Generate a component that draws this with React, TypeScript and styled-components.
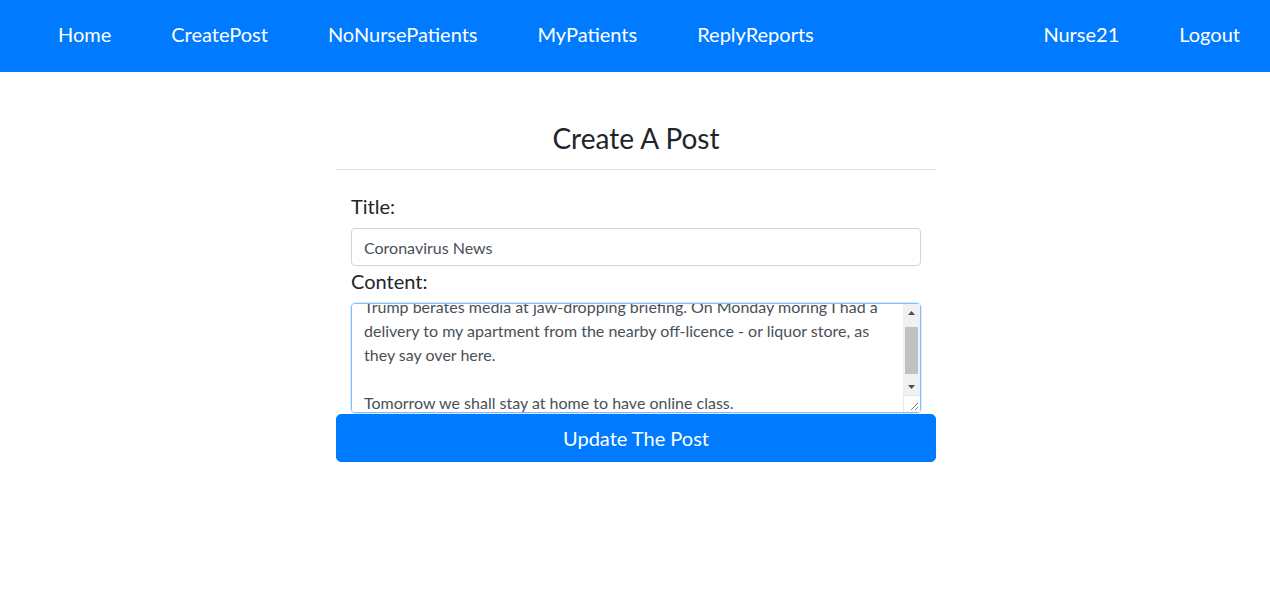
import React, { useEffect, useRef } from "react";
import styled, { createGlobalStyle } from "styled-components";

const Global = createGlobalStyle`
  html, body { margin: 0; padding: 0; background: #fff; }
  body { font-family: Lato, "Open Sans", sans-serif; color: #212529; }
  * { box-sizing: border-box; }
`;

const NavBar = styled.nav`
  height: 72px;
  background: #007bff;
  display: flex;
  align-items: center;
  padding: 0 0 5px 28px;
`;

const NavGroup = styled.div<{ $right?: boolean }>`
  display: flex;
  align-items: center;
  margin-left: ${(p) => (p.$right ? "auto" : "0")};
`;

const NavLink = styled.a`
  color: #fff;
  font-size: 20px;
  line-height: 30px;
  padding: 0 30px;
  text-decoration: none;
  cursor: pointer;
`;

const Card = styled.main`
  width: 600px;
  margin: 49px 0 0 calc(50% - 299px);
  display: flex;
  flex-direction: column;
`;

const Heading = styled.h1`
  margin: 0;
  font-size: 28px;
  font-weight: 400;
  line-height: 34px;
  text-align: center;
`;

const Divider = styled.hr`
  margin: 14px 0 0;
  border: 0;
  border-top: 1px solid #e2e2e2;
`;

const Fields = styled.div`
  padding: 21px 15px 0;
  display: flex;
  flex-direction: column;
`;

const Label = styled.label<{ $gap: number }>`
  font-size: 20px;
  line-height: 30px;
  margin-bottom: ${(p) => p.$gap}px;
`;

const Input = styled.input`
  height: 38px;
  width: 100%;
  padding: 6px 12px;
  font: inherit;
  font-size: 16px;
  line-height: 24px;
  color: #495057;
  border: 1px solid #ced4da;
  border-radius: 4px;
  outline: none;
`;

const AreaWrap = styled.div`
  position: relative;
  height: 110px;
`;

const Area = styled.textarea`
  height: 110px;
  width: 100%;
  padding: 6px 29px 6px 12px;
  font: inherit;
  font-size: 16px;
  line-height: 24px;
  color: #495057;
  border: 1px solid #80bdff;
  border-radius: 4px;
  outline: none;
  box-shadow: 0 0 0 1px rgba(0, 123, 255, 0.15);
  resize: none;
  display: block;
  scrollbar-width: none;
  caret-color: #000;
`;

const ScrollBar = styled.div`
  position: absolute;
  top: 1px;
  right: 1px;
  width: 17px;
  height: 91px;
  background: #f1f1f1;
  display: flex;
  flex-direction: column;
`;

const ArrowButton = styled.div`
  height: 17px;
  flex: none;
  display: flex;
  align-items: center;
  justify-content: center;
`;

const Track = styled.div`
  flex: 1;
  padding: 6px 2px 0;
`;

const Thumb = styled.div`
  height: 47px;
  background: #c1c1c1;
`;

const Corner = styled.div`
  position: absolute;
  right: 1px;
  bottom: 1px;
  width: 17px;
  height: 17px;
  background: #fff;
  border-top: 1px solid #e8e8e8;
  border-left: 1px solid #e8e8e8;
`;

const Button = styled.button`
  height: 48px;
  width: 100%;
  margin-top: 1px;
  background: #007bff;
  border: 1px solid #007bff;
  border-radius: 5px;
  color: #fff;
  font: inherit;
  font-size: 20px;
  line-height: 30px;
  cursor: pointer;
`;

const content =
  "Coronavirus: what we know so far about the outbreak.\nTrump berates media at jaw-dropping briefing. On Monday moring I had a delivery to my apartment from the nearby off-licence - or liquor store, as they say over here.\n\nTomorrow we shall stay at home to have online class.\n";

export default function App() {
  const ref = useRef<HTMLTextAreaElement>(null);
  useEffect(() => {
    const el = ref.current;
    if (el) {
      el.focus();
      const end = content.length - 1;
      el.setSelectionRange(end, end);
      el.scrollTop = 39;
    }
  }, []);
  return (
    <>
      <Global />
      <NavBar>
        <NavGroup>
          <NavLink>Home</NavLink>
          <NavLink>CreatePost</NavLink>
          <NavLink>NoNursePatients</NavLink>
          <NavLink>MyPatients</NavLink>
          <NavLink>ReplyReports</NavLink>
        </NavGroup>
        <NavGroup $right>
          <NavLink>Nurse21</NavLink>
          <NavLink>Logout</NavLink>
        </NavGroup>
      </NavBar>
      <Card>
        <Heading>Create A Post</Heading>
        <Divider />
        <Fields>
          <Label $gap={7}>Title:</Label>
          <Input defaultValue="Coronavirus News" />
          <Label $gap={7}>Content:</Label>
          <AreaWrap>
            <Area ref={ref} defaultValue={content} />
            <ScrollBar>
              <ArrowButton>
                <svg width="7" height="4" viewBox="0 0 7 4">
                  <path d="M0 4 L3.5 0 L7 4 Z" fill="#505050" />
                </svg>
              </ArrowButton>
              <Track>
                <Thumb />
              </Track>
              <ArrowButton>
                <svg width="7" height="4" viewBox="0 0 7 4">
                  <path d="M0 0 L3.5 4 L7 0 Z" fill="#505050" />
                </svg>
              </ArrowButton>
            </ScrollBar>
            <Corner>
              <svg width="16" height="16" viewBox="0 0 16 16">
                <path d="M14 7 L7 14 M14 11 L11 14" stroke="#808080" strokeWidth="1" />
              </svg>
            </Corner>
          </AreaWrap>
        </Fields>
        <Button>Update The Post</Button>
      </Card>
    </>
  );
}
